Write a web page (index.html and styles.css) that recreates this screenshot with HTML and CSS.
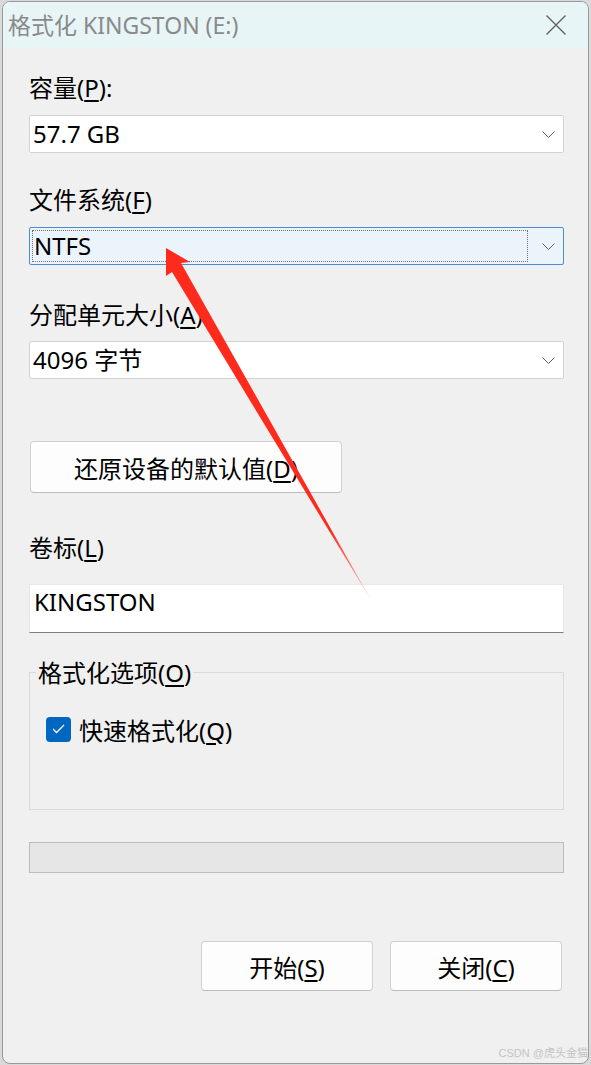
FILE: index.html
```html
<!DOCTYPE html>
<html>
<head>
<title>格式化 KINGSTON (E:)</title>
<link rel="stylesheet" href="styles.css">
</head>
<body>
<div class="window">
  <div class="titlebar">
    <span class="title">格式化 KINGSTON (E:)</span>
    <svg class="close" width="20" height="20" viewBox="0 0 20 20">
      <path d="M0.5 0.5 L19.5 19.5 M19.5 0.5 L0.5 19.5" stroke="#5f5f5f" stroke-width="1.3" fill="none"/>
    </svg>
  </div>

  <div class="content">
    <div class="label">容量(<u>P</u>):</div>
    <div class="combo mt12">
      <span class="value">57.7 GB</span>
      <svg class="chevron" width="13" height="7" viewBox="0 0 13 7"><polyline points="0.5,0.5 6.5,6.5 12.5,0.5" fill="none" stroke="#606060" stroke-width="1"/></svg>
    </div>

    <div class="label mt32">文件系统(<u>F</u>)</div>
    <div class="combo focused mt12">
      <span class="value focus-rect">NTFS</span>
      <svg class="chevron" width="13" height="7" viewBox="0 0 13 7"><polyline points="0.5,0.5 6.5,6.5 12.5,0.5" fill="none" stroke="#606060" stroke-width="1"/></svg>
    </div>

    <div class="label mt35">分配单元大小(<u>A</u>)</div>
    <div class="combo mt11">
      <span class="value">4096 字节</span>
      <svg class="chevron" width="13" height="7" viewBox="0 0 13 7"><polyline points="0.5,0.5 6.5,6.5 12.5,0.5" fill="none" stroke="#606060" stroke-width="1"/></svg>
    </div>

    <button class="btn restore">还原设备的默认值(<u>D</u>)</button>

    <div class="label mt40">卷标(<u>L</u>)</div>
    <div class="textbox">KINGSTON</div>

    <div class="group">
      <div class="group-title">格式化选项(<u>O</u>)</div>
      <div class="check-row">
        <span class="checkbox">
          <svg width="13" height="10" viewBox="0 0 13 10"><polyline points="1,5 4.5,8.5 12,1" fill="none" stroke="#fff" stroke-width="1.3"/></svg>
        </span>
        <span>快速格式化(<u>Q</u>)</span>
      </div>
    </div>

    <div class="progress"></div>

    <div class="actions">
      <button class="btn action">开始(<u>S</u>)</button>
      <button class="btn action">关闭(<u>C</u>)</button>
    </div>
  </div>
</div>

<svg class="arrow" width="591" height="1065" viewBox="0 0 591 1065">
  <defs>
    <linearGradient id="fade" gradientUnits="userSpaceOnUse" x1="166" y1="248" x2="371" y2="600">
      <stop offset="0" stop-color="#fe2a1c"/>
      <stop offset="0.8" stop-color="#fe2a1c"/>
      <stop offset="1" stop-color="#ffc4bf"/>
    </linearGradient>
  </defs>
  <polygon points="166,248 190,262 181,263 371,600 172,272 166,276" fill="url(#fade)"/>
</svg>

<div class="watermark">CSDN @虎头金猫</div>
</body>
</html>
```

FILE: styles.css
```css
body {
  margin: 0;
  width: 591px;
  height: 1065px;
  position: relative;
  overflow: hidden;
  background: #d9d9d9;
  font-family: "Noto Sans", "Noto Sans CJK SC", sans-serif;
  color: #000;
}
u {
  text-underline-offset: 3px;
}
.window {
  margin: 1px 0 0 2px;
  width: 587px;
  height: 1063px;
  box-sizing: border-box;
  border: 1px solid #9a9a9a;
  border-radius: 8px;
  background: #f0f0f0;
  overflow: hidden;
}
.titlebar {
  height: 46px;
  background: #e8f5f7;
  display: flex;
  align-items: center;
  justify-content: space-between;
  padding: 0 22px 0 5px;
}
.title {
  font-size: 23px;
  line-height: 30px;
  color: #8a8a8a;
}
.content {
  padding: 25px 24px 0 26px;
  font-size: 24px;
}
.label {
  line-height: 30px;
}
.mt11 { margin-top: 11px; }
.mt12 { margin-top: 12px; }
.mt32 { margin-top: 32px; }
.mt35 { margin-top: 35px; }
.mt40 { margin-top: 40px; }
.combo {
  height: 38px;
  box-sizing: border-box;
  border: 1px solid #d3d3d3;
  border-radius: 2px;
  background: #fff;
  display: flex;
  align-items: center;
  justify-content: space-between;
  padding: 0 8px 0 3px;
}
.combo .value {
  line-height: 36px;
}
.combo.focused {
  border-color: #4a8fd6;
  background: #ebf3fb;
  padding-left: 2px;
}
.focus-rect {
  flex: 1;
  height: 32px;
  box-sizing: border-box;
  line-height: 30px !important;
  border: 1px dotted #707070;
  padding-left: 1px;
  margin-right: 14px;
}
.btn {
  font-family: inherit;
  font-size: 24px;
  color: #000;
  background: #fdfdfd;
  border: 1px solid #d0d0d0;
  border-bottom-color: #bcbcbc;
  border-radius: 4px;
  padding: 0;
  box-sizing: border-box;
}
.restore {
  display: block;
  margin: 62px 0 0 1px;
  width: 312px;
  height: 52px;
}
.textbox {
  margin-top: 21px;
  height: 49px;
  box-sizing: border-box;
  background: #fff;
  border: 1px solid #e8e8e8;
  border-bottom: 1px solid #7c7c7c;
  padding: 2px 0 0 4px;
  line-height: 30px;
}
.group {
  margin-top: 39px;
  border: 1px solid #dadada;
  padding-bottom: 65px;
}
.group-title {
  width: fit-content;
  margin: -15px 0 0 6px;
  padding: 0 2px;
  line-height: 30px;
  background: #f0f0f0;
}
.check-row {
  display: flex;
  align-items: center;
  gap: 8px;
  height: 30px;
  margin-top: 26px;
  padding-left: 16px;
}
.checkbox {
  width: 25px;
  height: 25px;
  border-radius: 4px;
  background: #0067c0;
  display: flex;
  align-items: center;
  justify-content: center;
}
.progress {
  margin-top: 32px;
  height: 31px;
  box-sizing: border-box;
  border: 1px solid #bcbcbc;
  background: #e6e6e6;
}
.actions {
  margin-top: 68px;
  display: flex;
  justify-content: flex-end;
  gap: 17px;
  padding-right: 2px;
}
.action {
  width: 172px;
  height: 50px;
}
.arrow {
  position: absolute;
  left: 0;
  top: 0;
  pointer-events: none;
}
.watermark {
  position: absolute;
  right: 3px;
  bottom: 5px;
  font-family: "Liberation Sans", "Noto Sans CJK SC", sans-serif;
  font-size: 11px;
  color: #c4c4c4;
}
```
